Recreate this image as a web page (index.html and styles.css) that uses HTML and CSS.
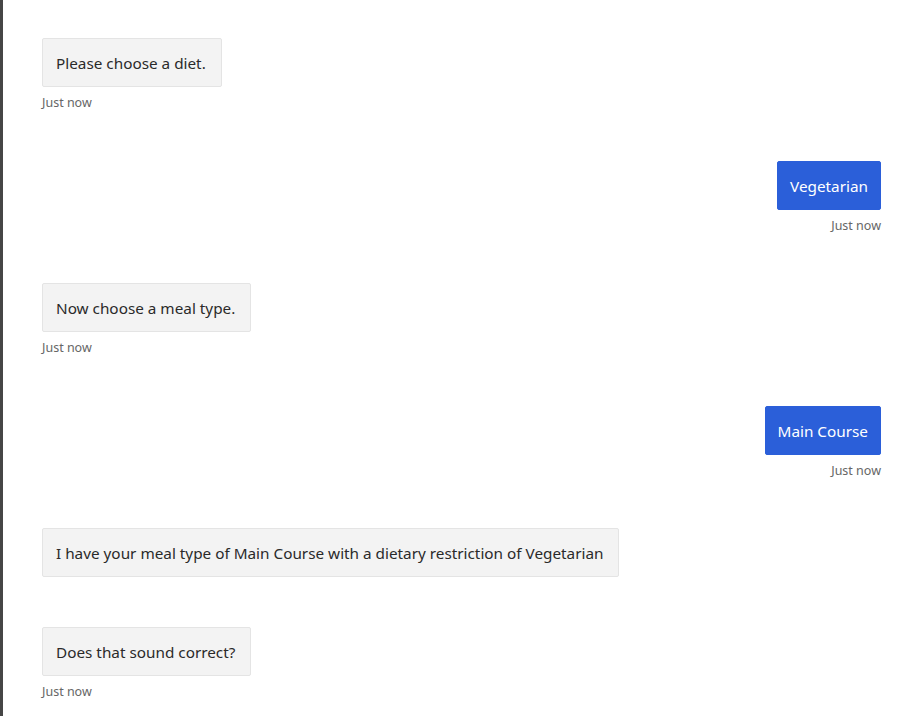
FILE: index.html
```
<!DOCTYPE html>
<html>
<head>
<meta charset="utf-8">
<link rel="stylesheet" href="styles.css">
</head>
<body>
<div class="frame">
  <div class="chat">
    <div class="msg bot">
      <div class="bubble">Please choose a diet.</div>
      <div class="time">Just now</div>
    </div>
    <div class="msg user">
      <div class="bubble">Vegetarian</div>
      <div class="time">Just now</div>
    </div>
    <div class="msg bot">
      <div class="bubble">Now choose a meal type.</div>
      <div class="time">Just now</div>
    </div>
    <div class="msg user">
      <div class="bubble">Main Course</div>
      <div class="time">Just now</div>
    </div>
    <div class="msg bot notime">
      <div class="bubble">I have your meal type of Main Course with a dietary restriction of Vegetarian</div>
    </div>
    <div class="msg bot">
      <div class="bubble">Does that sound correct?</div>
      <div class="time">Just now</div>
    </div>
  </div>
</div>
</body>
</html>
```
FILE: styles.css
```
html, body {
  margin: 0;
  padding: 0;
  background: #ffffff;
}
.frame {
  width: 919px;
  height: 716px;
  box-sizing: border-box;
  border-left: 3px solid #464646;
  overflow: hidden;
  font-family: "Noto Sans", "Open Sans", sans-serif;
}
.chat {
  display: flex;
  flex-direction: column;
  padding: 38px 38px 0 39px;
}
.msg {
  display: flex;
  flex-direction: column;
  align-items: flex-start;
  margin-bottom: 50px;
}
.msg.user {
  align-items: flex-end;
}
.bubble {
  box-sizing: border-box;
  height: 49px;
  padding: 1px 15px 0 13px;
  display: flex;
  align-items: center;
  font-size: 15.3px;
  color: #2a2a2a;
  background: #f3f3f3;
  border: 1px solid #e4e4e4;
  border-radius: 2px;
}
.msg.user .bubble {
  padding: 1px 12px 0 12px;
  background: #2b5fd9;
  border-color: #2b5fd9;
  color: #ffffff;
}
.time {
  height: 23.5px;
  padding-top: 8px;
  box-sizing: border-box;
  font-size: 12.5px;
  line-height: 15px;
  color: #666666;
}
```
